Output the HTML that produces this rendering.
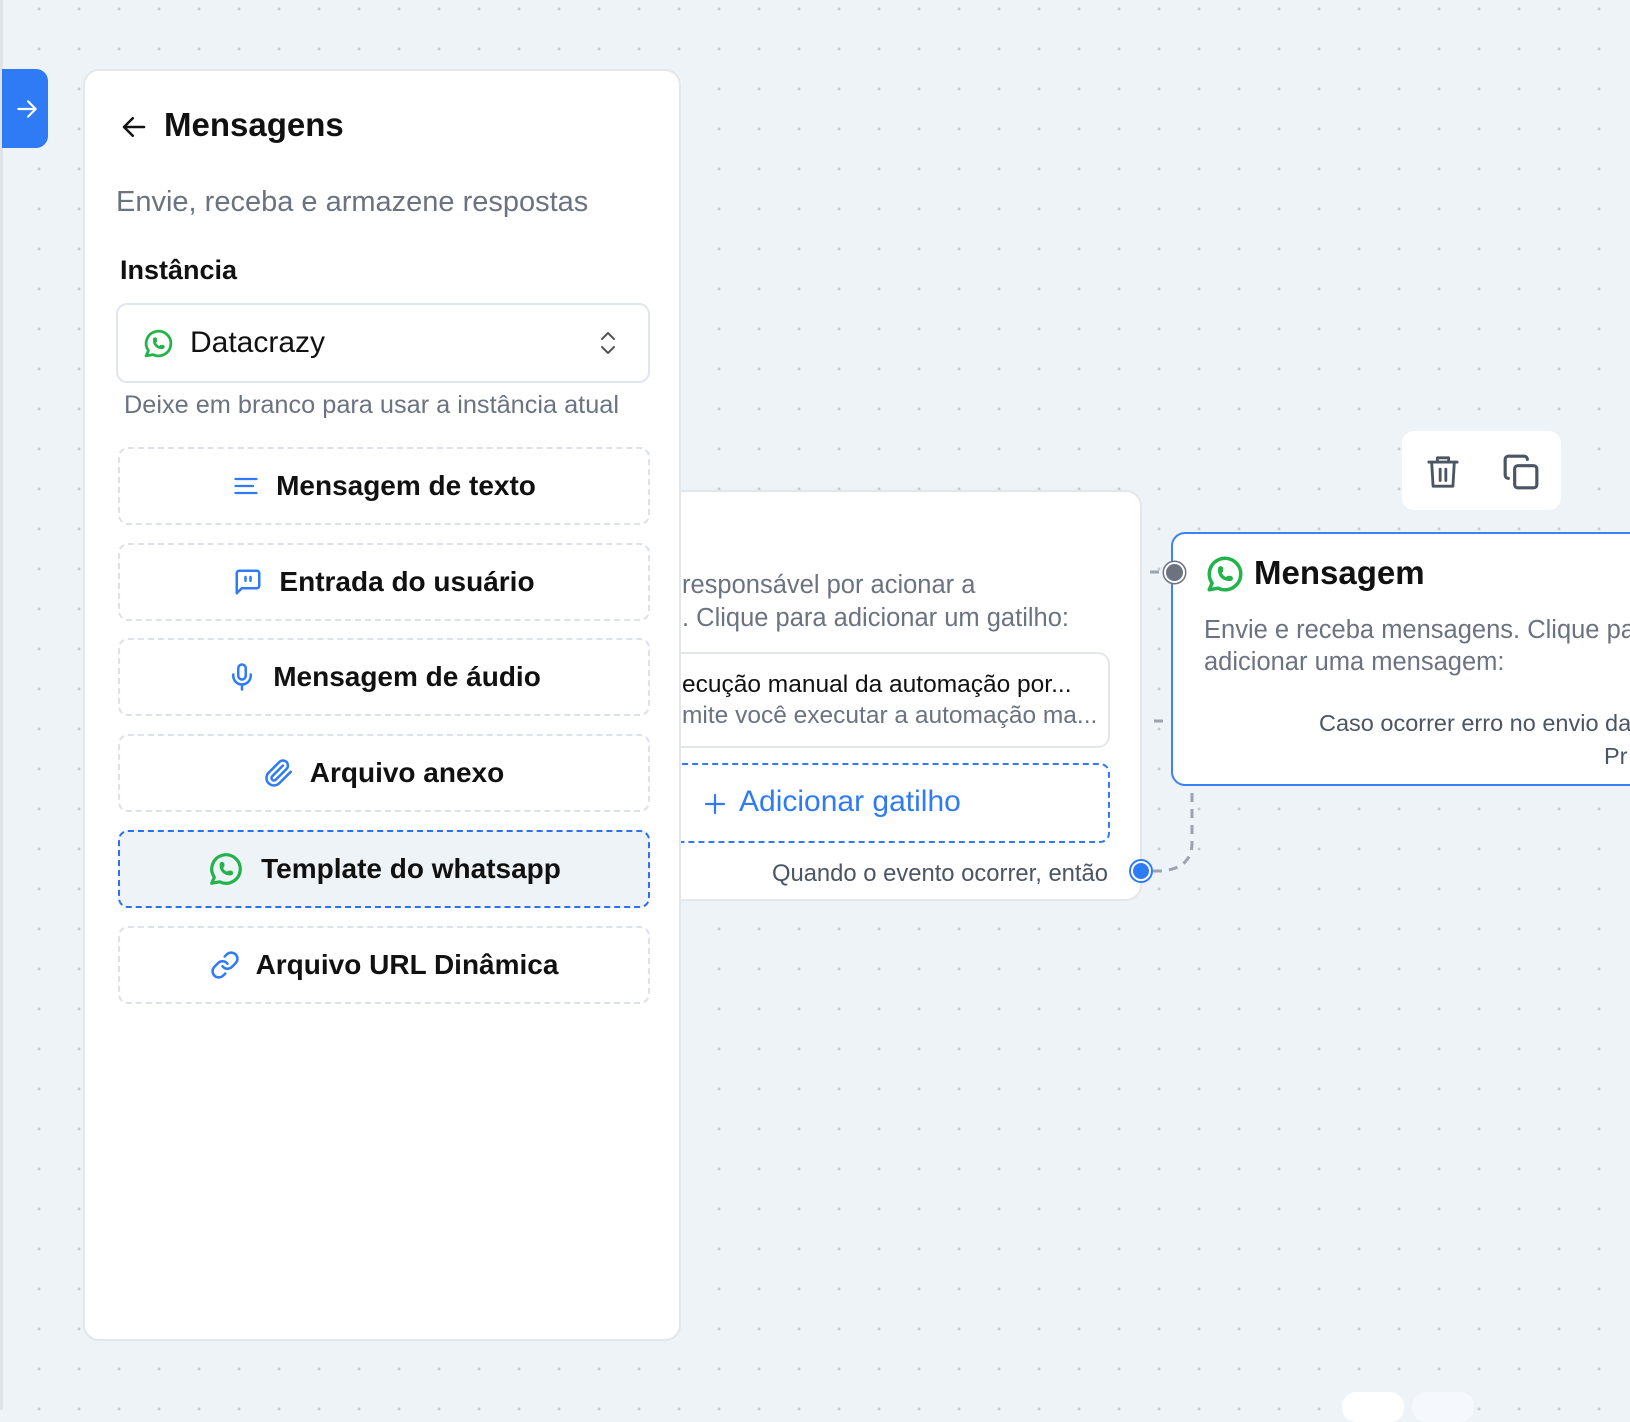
<!DOCTYPE html>
<html><head><meta charset="utf-8">
<style>
*{margin:0;padding:0;box-sizing:border-box}
body{width:1630px;height:1410px;overflow:hidden;position:relative;font-family:"Liberation Sans",sans-serif;background-color:#eef3f7;
background-image:radial-gradient(circle,#c4c9cf 1.2px,transparent 1.6px);background-size:40px 40px;background-position:19px -11px;}
.abs{position:absolute}
.edge{left:0;top:0;width:3px;height:1410px;background:#dfe3e8}
.tab{left:2px;top:69px;width:46px;height:79px;background:#2f7bf6;border-radius:0 12px 12px 0}
.panel{left:83px;top:69px;width:598px;height:1272px;background:#fff;border:2px solid #e3e7ec;border-radius:16px;z-index:5}
.t{position:absolute;white-space:nowrap}
.btn{position:absolute;left:33px;width:532px;height:78px;border:2px dashed #dde2ea;border-radius:10px;display:flex;align-items:center;justify-content:center;font-size:28px;font-weight:bold;color:#111;gap:16px}
.btn svg{flex:none}
.sel{background:#eef3f8;border-color:#2f6fed}
.node{left:560px;top:490px;width:582px;height:411px;background:#fff;border:2px solid #e3e7ec;border-radius:16px}
.gray{color:#6b7280}
.card2{left:1171px;top:532px;width:520px;height:254px;background:#fff;border:2px solid #3b82f6;border-radius:14px;overflow:hidden}
</style></head><body>
<div class="abs edge"></div>
<div class="abs tab"><svg class="abs" style="left:12px;top:27px" width="26" height="26" viewBox="0 0 24 24" fill="none" stroke="#fff" stroke-width="2" stroke-linecap="round" stroke-linejoin="round"><path d="M4 12h16M13 5l7 7-7 7"/></svg></div>

<div class="abs node">
  <div class="t gray" style="left:120px;top:79px;font-size:25.5px">responsável por acionar a</div>
  <div class="t gray" style="left:120px;top:112px;font-size:25.5px">. Clique para adicionar um gatilho:</div>
  <div class="abs" style="left:40px;top:160px;width:508px;height:96px;border:2px solid #e3e7ec;border-radius:12px;background:#fff"></div>
  <div class="t" style="left:120px;top:179px;font-size:24.5px;color:#111">ecução manual da automação por...</div>
  <div class="t gray" style="left:120px;top:210px;font-size:24.5px">mite você executar a automação ma...</div>
  <div class="abs" style="left:40px;top:271px;width:508px;height:80px;border:2px dashed #2f7bf6;border-radius:10px"></div>
  <svg class="abs" style="left:141px;top:300px" width="24" height="24" viewBox="0 0 24 24" fill="none" stroke="#2f7bf6" stroke-width="2.2" stroke-linecap="round"><path d="M12 3v18M3 12h18"/></svg>
  <div class="t" style="left:177px;top:293px;font-size:30px;color:#2f7bf6">Adicionar gatilho</div>
  <div class="t" style="right:32px;top:368px;font-size:23.8px;color:#4b5563">Quando o evento ocorrer, então</div>
</div>
<div class="abs" style="left:1131px;top:861px;width:20px;height:20px;border-radius:50%;background:#2f7bf6;border:2px solid #fff;box-shadow:0 0 0 2px #2f7bf6"></div>
<svg class="abs" style="left:1145px;top:560px" width="60" height="320" fill="none" stroke="#9ca3af" stroke-width="3" stroke-dasharray="9 7">
<path d="M5 12h22"/><path d="M9 161h10"/><path d="M47 233v50q0 25-30 28h-10"/></svg>

<div class="abs" style="left:1402px;top:431px;width:159px;height:79px;background:#fff;border-radius:12px">
<svg class="abs" style="left:24px;top:22px" width="34" height="38" viewBox="0 0 24 26" fill="none" stroke="#4b5563" stroke-width="2" stroke-linecap="round" stroke-linejoin="round"><path d="M2 6h20M8 6V3h8v3M4 6l1 17h14l1-17M10 11v8M14 11v8"/></svg>
<svg class="abs" style="left:100px;top:22px" width="38" height="38" viewBox="0 0 24 24" fill="none" stroke="#4b5563" stroke-width="2" stroke-linecap="round" stroke-linejoin="round"><rect x="8" y="8" width="14" height="14" rx="2"/><path d="M4 16c-1.1 0-2-.9-2-2V4c0-1.1.9-2 2-2h10c1.1 0 2 .9 2 2"/></svg>
</div>

<div class="abs card2">
  <svg class="abs" style="left:31px;top:19px" width="42" height="42" viewBox="0 0 24 24" fill="none" stroke="#22b34a" stroke-width="2" stroke-linecap="round" stroke-linejoin="round"><path d="M3 21l1.65-3.8a9 9 0 1 1 3.4 2.9L3 21"/><path d="M9 10a.5.5 0 0 0 1 0V9a.5.5 0 0 0-1 0v1a5 5 0 0 0 5 5h1a.5.5 0 0 0 0-1h-1a.5.5 0 0 0 0 1"/></svg>
  <div class="t" style="left:81px;top:20px;font-size:33px;font-weight:bold;color:#111">Mensagem</div>
  <div class="t gray" style="left:31px;top:82px;font-size:25.5px">Envie e receba mensagens. Clique para</div>
  <div class="t gray" style="left:31px;top:114px;font-size:25.5px">adicionar uma mensagem:</div>
  <div class="t" style="left:146px;top:176px;font-size:23.5px;color:#4b5563">Caso ocorrer erro no envio da</div>
  <div class="t" style="left:431px;top:209px;font-size:23.5px;color:#4b5563">Pr</div>
</div>
<div class="abs" style="left:1164px;top:562px;width:21px;height:21px;border-radius:50%;background:#6b7280;border:2px solid #fff;box-shadow:0 0 0 1.5px #6b7280"></div>

<div class="abs" style="left:1342px;top:1392px;width:62px;height:30px;background:#fff;border-radius:14px"></div>
<div class="abs" style="left:1412px;top:1392px;width:62px;height:30px;background:#f5f8fc;border-radius:14px"></div>

<div class="abs panel">
  <svg class="abs" style="left:34px;top:41px" width="30" height="30" viewBox="0 0 24 24" fill="none" stroke="#111" stroke-width="2" stroke-linecap="round" stroke-linejoin="round"><path d="M20 12H4M11 5l-7 7 7 7"/></svg>
  <div class="t" style="left:79px;top:35px;font-size:33px;font-weight:bold;color:#111">Mensagens</div>
  <div class="t gray" style="left:31px;top:115px;font-size:29px">Envie, receba e armazene respostas</div>
  <div class="t" style="left:35px;top:184px;font-size:27px;font-weight:bold;color:#111">Instância</div>
  <div class="abs" style="left:31px;top:232px;width:534px;height:80px;border:2px solid #e1e5ec;border-radius:11px">
    <svg class="abs" style="left:24px;top:22px" width="33" height="33" viewBox="0 0 24 24" fill="none" stroke="#22b34a" stroke-width="2" stroke-linecap="round" stroke-linejoin="round"><path d="M3 21l1.65-3.8a9 9 0 1 1 3.4 2.9L3 21"/><path d="M9 10a.5.5 0 0 0 1 0V9a.5.5 0 0 0-1 0v1a5 5 0 0 0 5 5h1a.5.5 0 0 0 0-1h-1a.5.5 0 0 0 0 1"/></svg>
    <div class="t" style="left:72px;top:21px;font-size:30px;color:#111">Datacrazy</div>
    <svg class="abs" style="left:479px;top:25px" width="22" height="26" viewBox="0 0 22 26" fill="none" stroke="#555" stroke-width="2" stroke-linecap="round" stroke-linejoin="round"><path d="M5 9l6-6 6 6M5 17l6 6 6-6"/></svg>
  </div>
  <div class="t gray" style="left:39px;top:320px;font-size:25.3px">Deixe em branco para usar a instância atual</div>

  <div class="btn" style="top:376px">
    <svg width="28" height="28" viewBox="0 0 24 24" fill="none" stroke="#2f7bf6" stroke-width="2" stroke-linecap="round"><path d="M3 6h18M3 12h15M3 18h18"/></svg>Mensagem de texto</div>
  <div class="btn" style="top:472px">
    <svg width="30" height="30" viewBox="0 0 24 24" fill="none" stroke="#2f7bf6" stroke-width="2" stroke-linecap="round" stroke-linejoin="round"><path d="M21 15a2 2 0 0 1-2 2H7l-4 4V5a2 2 0 0 1 2-2h14a2 2 0 0 1 2 2z"/><path d="M10 8v3M14 8v3"/></svg>Entrada do usuário</div>
  <div class="btn" style="top:567px">
    <svg width="30" height="30" viewBox="0 0 24 24" fill="none" stroke="#2f7bf6" stroke-width="2" stroke-linecap="round" stroke-linejoin="round"><rect x="9" y="2" width="6" height="12" rx="3"/><path d="M19 10v1a7 7 0 0 1-14 0v-1M12 18v4"/></svg>Mensagem de áudio</div>
  <div class="btn" style="top:663px">
    <svg width="30" height="30" viewBox="0 0 24 24" fill="none" stroke="#2f7bf6" stroke-width="2" stroke-linecap="round" stroke-linejoin="round"><path d="M21.4 11.05l-9.19 9.19a6 6 0 0 1-8.49-8.49l8.57-8.57A4 4 0 1 1 18 8.84l-8.59 8.57a2 2 0 0 1-2.83-2.83l8.49-8.48"/></svg>Arquivo anexo</div>
  <div class="btn sel" style="top:759px">
    <svg width="38" height="38" viewBox="0 0 24 24" fill="none" stroke="#22b34a" stroke-width="2" stroke-linecap="round" stroke-linejoin="round"><path d="M3 21l1.65-3.8a9 9 0 1 1 3.4 2.9L3 21"/><path d="M9 10a.5.5 0 0 0 1 0V9a.5.5 0 0 0-1 0v1a5 5 0 0 0 5 5h1a.5.5 0 0 0 0-1h-1a.5.5 0 0 0 0 1"/></svg>Template do whatsapp</div>
  <div class="btn" style="top:855px">
    <svg width="30" height="30" viewBox="0 0 24 24" fill="none" stroke="#2f7bf6" stroke-width="2" stroke-linecap="round" stroke-linejoin="round"><path d="M10 13a5 5 0 0 0 7.54.54l3-3a5 5 0 0 0-7.07-7.07l-1.72 1.71"/><path d="M14 11a5 5 0 0 0-7.54-.54l-3 3a5 5 0 0 0 7.07 7.07l1.71-1.71"/></svg>Arquivo URL Dinâmica</div>
</div>
</body></html>
